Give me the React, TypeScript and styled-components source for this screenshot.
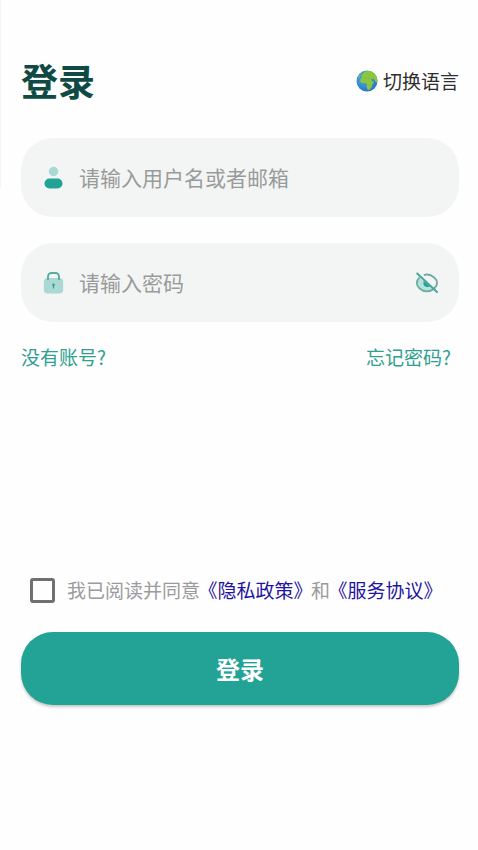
import React, { useState } from "react";
import styled, { createGlobalStyle } from "styled-components";

const GlobalStyle = createGlobalStyle`
  * { box-sizing: border-box; }
  body {
    margin: 0;
    background: #fefefe;
    font-family: "Noto Sans CJK SC", sans-serif;
  }
  button, input { font-family: inherit; }
`;

const Page = styled.main`
  position: relative;
  display: flex;
  flex-direction: column;
  min-height: 100vh;
  padding: 56px 19px 40px 21px;

  &::before {
    content: "";
    position: absolute;
    left: 0;
    top: 0;
    width: 1px;
    height: 188px;
    background: #f4f4f4;
  }
`;

const Header = styled.header`
  display: flex;
  align-items: center;
  justify-content: space-between;
  height: 50px;
  margin-bottom: 32px;
`;

const Title = styled.h1`
  margin: 0;
  padding-bottom: 2px;
  font-size: 37px;
  line-height: 48px;
  font-weight: 700;
  color: #0f4a44;
`;

const LanguageButton = styled.button`
  display: flex;
  align-items: center;
  gap: 5px;
  padding: 0;
  border: 0;
  background: none;
  color: #2e2e2e;
  font-size: 19px;
  line-height: 24px;
  cursor: pointer;
`;

const Fields = styled.div`
  display: flex;
  flex-direction: column;
  gap: 26px;
`;

const Field = styled.div`
  display: flex;
  align-items: center;
  height: 79px;
  padding: 0 20px 0 21px;
  border-radius: 32px;
  background: #f3f5f5;
`;

const FieldLabel = styled.label`
  display: flex;
  margin-right: 15px;
`;

const TextInput = styled.input`
  flex: 1;
  min-width: 0;
  padding: 0 0 2px;
  border: 0;
  outline: 0;
  background: none;
  color: #333;
  font-size: 21px;
  line-height: 32px;

  &::placeholder { color: #999b9a; opacity: 1; }
`;

const IconButton = styled.button`
  display: flex;
  padding: 0;
  border: 0;
  background: none;
  cursor: pointer;
`;

const LinkRow = styled.nav`
  display: flex;
  justify-content: space-between;
  margin-top: 21px;
  padding-right: 8px;
`;

const TextLink = styled.a`
  color: #2f9f90;
  font-size: 19px;
  line-height: 28px;
  text-decoration: none;
`;

const Agreement = styled.div`
  display: flex;
  align-items: center;
  gap: 12px;
  height: 28px;
  margin: 205px 0 28px;
  padding-left: 9px;
`;

const CheckBox = styled.input`
  appearance: none;
  flex: none;
  width: 25px;
  height: 25px;
  margin: 0;
  border: 3px solid #707070;
  border-radius: 3px;
  background: #fefefe;

  &:checked { border-color: #22a396; background: #22a396; }
`;

const AgreementText = styled.label`
  color: #9b9b9b;
  font-size: 19px;
  line-height: 28px;
  white-space: nowrap;
`;

const PolicyLink = styled.a`
  margin: 0 8px;
  color: #1f14a0;
  font-feature-settings: "halt";
  text-decoration: none;
`;

const SubmitButton = styled.button`
  height: 73px;
  border: 0;
  border-radius: 32px;
  background: #22a396;
  box-shadow: 0 2px 3px rgba(0, 0, 0, 0.22);
  color: #fff;
  font-size: 24px;
  line-height: 32px;
  font-weight: 700;
  cursor: pointer;
`;

const GlobeIcon = () => (
  <svg width="22" height="22" viewBox="0 0 22 22" aria-hidden="true">
    <defs>
      <radialGradient id="sea" cx="0.4" cy="0.35" r="0.7">
        <stop offset="0" stopColor="#4eb4ea" />
        <stop offset="1" stopColor="#2572c4" />
      </radialGradient>
      <clipPath id="globe"><circle cx="11" cy="11" r="10.5" /></clipPath>
    </defs>
    <circle cx="11" cy="11" r="10.5" fill="url(#sea)" />
    <g clipPath="url(#globe)" fill="#8cc63a">
      <path d="M4.2 9.4 6.4 7.6l3.4-.4 2 1.2 3 .2 1.4 2.6 2 .8-2 2.6-.6 2.6-2.2 2.8-2-.6-.8-3 .2-2.2-1.4-1.2-3 .2L4.2 12z" />
      <path d="M5.4 5.8 8.6 1.4 15 .4l4.4 3.4 2.4 5.2-.4 4-2-1.4-1.8-2.8-2.2.2-2.6-1-1.8.2-1-1.2-2 .6-2-.2z" />
      <path d="m2 6.4 3-3.4-.6 3.2-1.8 2.4z" opacity=".7" />
    </g>
  </svg>
);

const UserIcon = () => (
  <svg width="22" height="24" viewBox="0 0 22 24" aria-hidden="true">
    <circle cx="11.5" cy="5.5" r="4.7" fill="#a9d9d2" />
    <rect x="2.5" y="12.5" width="18" height="10" rx="5" fill="#22a396" />
  </svg>
);

const LockIcon = () => (
  <svg width="22" height="24" viewBox="0 0 22 24" aria-hidden="true">
    <rect x="1.8" y="7" width="19.4" height="15.6" rx="4" fill="#a9d9d2" />
    <path d="M6 9V5.5A3.5 3.5 0 0 1 9.5 2h4A3.5 3.5 0 0 1 17 5.5V9" fill="none" stroke="#58ada2" strokeWidth="1.9" />
    <circle cx="11.5" cy="13.8" r="1.3" fill="#3c9c91" />
    <path d="M11.5 14v3" stroke="#3c9c91" strokeWidth="1.2" strokeLinecap="round" />
  </svg>
);

const EyeOffIcon = () => (
  <svg width="24" height="22" viewBox="0 0 24 22" aria-hidden="true">
    <path d="M4 5.5 19 18.2c-6 3.6-12.8 1.6-16.2-4.4-1.4-2.6-1-5.4 1.2-8.3z" fill="#b3e3dc" />
    <path d="M8.8 8.8 15.4 14.6c-2.6 1-5.6.4-6.6-1.6-.6-1.4-.5-2.8 0-4.2z" fill="#22a396" />
    <path d="M4.6 5.4C.9 8.8.9 13.2 4.6 16.5c4.4 3.8 10.2 3.8 14.6 0 3.8-3.3 3.8-7.7 0-11-3-2.7-7-3.5-10.4-2.4" fill="none" stroke="#6fada6" strokeWidth="1.9" />
    <path d="M2.2 1.5 22 20" stroke="#4ba59a" strokeWidth="2" strokeLinecap="round" />
  </svg>
);

export default function App() {
  const [visible, setVisible] = useState(false);

  return (
    <>
      <GlobalStyle />
      <Page>
        <Header>
          <Title>登录</Title>
          <LanguageButton type="button"><GlobeIcon />切换语言</LanguageButton>
        </Header>
        <Fields>
          <Field>
            <FieldLabel htmlFor="account" aria-label="用户名或者邮箱"><UserIcon /></FieldLabel>
            <TextInput id="account" type="text" placeholder="请输入用户名或者邮箱" />
          </Field>
          <Field>
            <FieldLabel htmlFor="password" aria-label="密码"><LockIcon /></FieldLabel>
            <TextInput id="password" type={visible ? "text" : "password"} placeholder="请输入密码" />
            <IconButton type="button" aria-label="显示密码" onClick={() => setVisible(!visible)}>
              <EyeOffIcon />
            </IconButton>
          </Field>
        </Fields>
        <LinkRow>
          <TextLink href="#register">没有账号?</TextLink>
          <TextLink href="#forgot">忘记密码?</TextLink>
        </LinkRow>
        <Agreement>
          <CheckBox id="agree" type="checkbox" />
          <AgreementText htmlFor="agree">
            我已阅读并同意<PolicyLink href="#privacy">《隐私政策》</PolicyLink>和<PolicyLink href="#terms">《服务协议》</PolicyLink>
          </AgreementText>
        </Agreement>
        <SubmitButton type="button">登录</SubmitButton>
      </Page>
    </>
  );
}
